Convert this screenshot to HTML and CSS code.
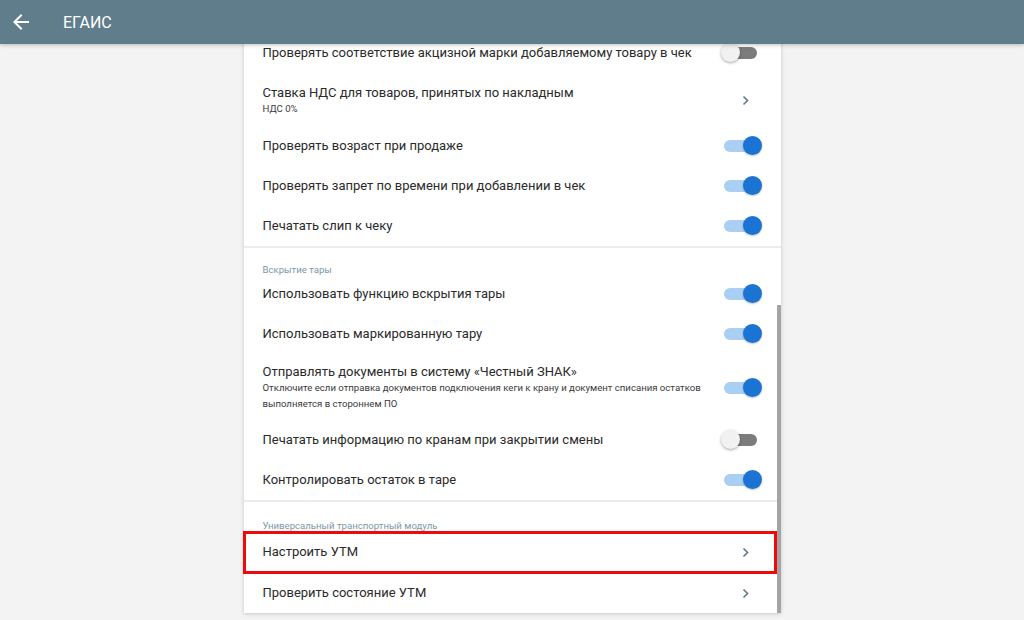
FILE: index.html
```html
<!DOCTYPE html>
<html>
<head>
  <meta charset="UTF-8">
  <title>ЕГАИС</title>
  <link rel="stylesheet" href="styles.css">
</head>
<body>
  <header class="topbar">
    <svg class="back" width="24" height="24" viewBox="0 0 24 24"><path d="M20 11H7.83l5.59-5.59L12 4l-8 8 8 8 1.41-1.41L7.83 13H20v-2z" fill="#fff"/></svg>
    <h1>ЕГАИС</h1>
  </header>

  <main class="scroll">
    <div class="card">
      <div class="row">
        <div class="txt"><div class="title">Проверять соответствие акцизной марки добавляемому товару в чек</div></div>
        <div class="ctl"><span class="sw"></span></div>
      </div>
      <div class="row two">
        <div class="txt">
          <div class="title">Ставка НДС для товаров, принятых по накладным</div>
          <div class="sub">НДС 0%</div>
        </div>
        <div class="ctl"><svg class="chev" width="7" height="11" viewBox="0 0 7 11"><path d="M1.5 1.5l4 4-4 4" fill="none" stroke="#607d8b" stroke-width="1.7"/></svg></div>
      </div>
      <div class="row">
        <div class="txt"><div class="title">Проверять возраст при продаже</div></div>
        <div class="ctl"><span class="sw on"></span></div>
      </div>
      <div class="row">
        <div class="txt"><div class="title">Проверять запрет по времени при добавлении в чек</div></div>
        <div class="ctl"><span class="sw on"></span></div>
      </div>
      <div class="row">
        <div class="txt"><div class="title">Печатать слип к чеку</div></div>
        <div class="ctl"><span class="sw on"></span></div>
      </div>

      <div class="group">
        <div class="caption">Вскрытие тары</div>
        <div class="row">
          <div class="txt"><div class="title">Использовать функцию вскрытия тары</div></div>
          <div class="ctl"><span class="sw on"></span></div>
        </div>
        <div class="row">
          <div class="txt"><div class="title">Использовать маркированную тару</div></div>
          <div class="ctl"><span class="sw on"></span></div>
        </div>
        <div class="row three">
          <div class="txt">
            <div class="title">Отправлять документы в систему «Честный ЗНАК»</div>
            <div class="sub">Отключите если отправка документов подключения кеги к крану и документ списания остатков выполняется в стороннем ПО</div>
          </div>
          <div class="ctl"><span class="sw on"></span></div>
        </div>
        <div class="row">
          <div class="txt"><div class="title">Печатать информацию по кранам при закрытии смены</div></div>
          <div class="ctl"><span class="sw"></span></div>
        </div>
        <div class="row">
          <div class="txt"><div class="title">Контролировать остаток в таре</div></div>
          <div class="ctl"><span class="sw on"></span></div>
        </div>
      </div>

      <div class="group utm">
        <div class="caption">Универсальный транспортный модуль</div>
        <div class="row link">
          <div class="txt"><div class="title">Настроить УТМ</div></div>
          <div class="ctl"><svg class="chev" width="7" height="11" viewBox="0 0 7 11"><path d="M1.5 1.5l4 4-4 4" fill="none" stroke="#607d8b" stroke-width="1.7"/></svg></div>
          <span class="mark"></span>
        </div>
        <div class="row">
          <div class="txt"><div class="title">Проверить состояние УТМ</div></div>
          <div class="ctl"><svg class="chev" width="7" height="11" viewBox="0 0 7 11"><path d="M1.5 1.5l4 4-4 4" fill="none" stroke="#607d8b" stroke-width="1.7"/></svg></div>
        </div>
      </div>

      <span class="thumb"></span>
    </div>
  </main>
</body>
</html>
```

FILE: styles.css
```css
body {margin:0;background:#f3f3f3;font-family:Roboto,"Liberation Sans",sans-serif;color:#2a2a2a;}

.topbar {height:44px;background:#607d8b;display:flex;align-items:center;position:relative;z-index:2;
  box-shadow:0 1px 4px rgba(0,0,0,0.25);}
.topbar .back {margin-left:9px;}
.topbar h1 {margin:0 0 0 30px;font-size:16px;font-weight:400;color:#fff;}

.scroll {height:576px;overflow:hidden;}
.card {width:537px;margin:-11px auto 0;background:#fff;position:relative;
  box-shadow:0 1px 4px rgba(0,0,0,0.18);}

.row {display:flex;align-items:center;min-height:40px;padding-left:19px;box-sizing:border-box;position:relative;}
.row .txt {flex:1;min-width:0;}
.row .title {font-size:13px;line-height:16px;white-space:nowrap;}
.row .sub {font-size:9.6px;line-height:16px;color:#3a3a3a;}
.row.two {height:53px;padding-top:2px;}
.row.three {height:66px;padding-top:1px;}

.ctl {width:40px;height:20px;flex:none;display:flex;align-items:center;justify-content:flex-end;padding-right:24px;}
.chev {margin-right:8px;}

.sw {width:33px;height:12px;border-radius:6px;background:#7c7c7c;position:relative;}
.sw::after {content:'';position:absolute;left:-3px;top:-4px;width:19px;height:19px;border-radius:50%;
  background:#f1f1f1;box-shadow:0 1px 3px rgba(0,0,0,0.35);}
.sw.on {background:#a9cff2;}
.sw.on::after {left:auto;right:-5px;background:#1b74d4;box-shadow:0 1px 2px rgba(0,0,0,0.25);}

.group {border-top:2px solid #ececec;}
.caption {font-size:9.6px;line-height:12px;color:#7d97a8;padding:16px 19px 0;height:26px;box-sizing:border-box;}
.group.utm .caption {padding-top:18px;height:29px;}
.group.utm .row.link {height:42px;}

.mark {position:absolute;left:-1px;right:4px;top:0;bottom:-1px;border:3px solid #ee0a0a;}
.thumb {position:absolute;right:0;top:272px;bottom:0;width:4px;background:#a4a4a4;}
```
